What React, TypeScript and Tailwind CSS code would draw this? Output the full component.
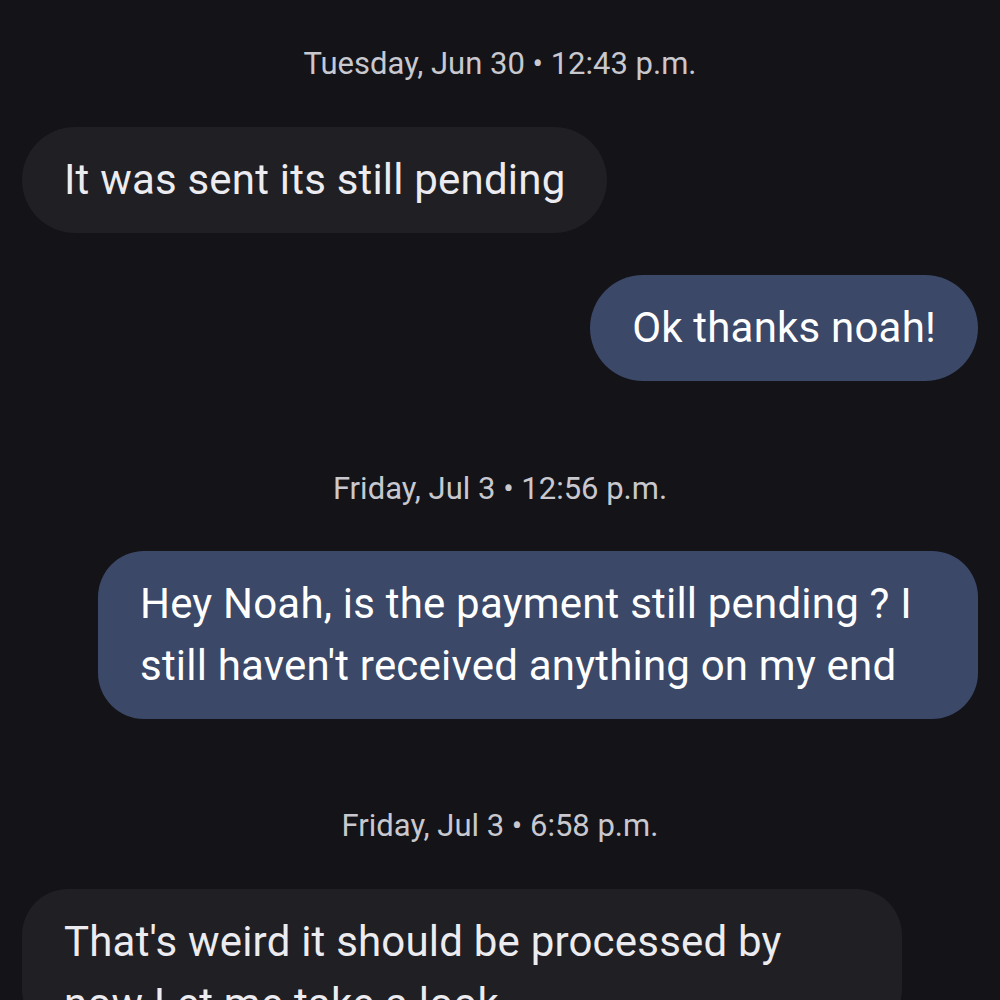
export default function App() {
  const font = { fontFamily: "Roboto, 'Noto Sans', sans-serif" }

  return (
    <div className="min-h-screen w-full overflow-hidden bg-[#131318] pt-[44px]" style={font}>
      <div className="flex flex-col">
        <div className="h-[40px] text-center text-[31px] leading-[40px] text-[#c8c8ce]">
          Tuesday, Jun 30 • 12:43 p.m.
        </div>

        <div className="mt-[43px] flex pl-[22px]">
          <div className="rounded-full bg-[#1f1f24] px-[42px] py-[22px] text-[42px] leading-[62px] tracking-[0.2px] text-[#ececf0]">
            It was sent its still pending
          </div>
        </div>

        <div className="mt-[42px] flex justify-end pr-[22px]">
          <div className="rounded-full bg-[#3b4868] px-[42px] py-[22px] text-[42px] leading-[62px] tracking-[0.2px] text-white">
            Ok thanks noah!
          </div>
        </div>

        <div className="mt-[88px] h-[40px] text-center text-[31px] leading-[40px] text-[#c8c8ce]">
          Friday, Jul 3 • 12:56 p.m.
        </div>

        <div className="mt-[42px] flex justify-end pr-[22px]">
          <div className="w-[880px] rounded-[46px] bg-[#3b4868] px-[42px] py-[22px] text-[42px] leading-[62px] tracking-[0.2px] text-white">
            Hey Noah, is the payment still pending ? I
            <br />
            still haven't received anything on my end
          </div>
        </div>

        <div className="mt-[87px] h-[40px] text-center text-[31px] leading-[40px] text-[#c8c8ce]">
          Friday, Jul 3 • 6:58 p.m.
        </div>

        <div className="mt-[43px] flex pl-[22px]">
          <div className="w-[880px] rounded-[46px] bg-[#1f1f24] px-[42px] pt-[22px] text-[42px] leading-[62px] tracking-[0.2px] text-[#ececf0]">
            That's weird it should be processed by
            <br />
            now Let me take a look
          </div>
        </div>
      </div>
    </div>
  )
}
